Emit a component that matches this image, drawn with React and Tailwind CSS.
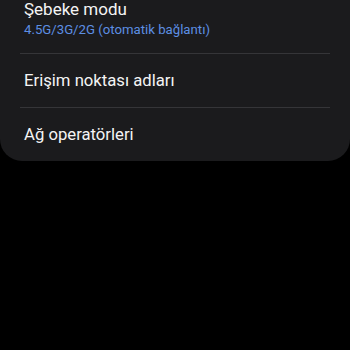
import React from 'react';

const rows = [
  { title: 'Erişim noktası adları' },
  { title: 'Ağ operatörleri' },
];

export default function App() {
  return (
    <div className="w-[350px] h-[350px] bg-black overflow-hidden" style={{ fontFamily: 'Roboto, "Noto Sans", sans-serif' }}>
      <div className="bg-[#1b1b1d] rounded-b-[22px]">
        {/* first row, cut at the top */}
        <div className="px-6 pb-[15px]">
          <div className="text-[17px] leading-[22px] text-[#f4f4f4] -mt-[2px]">Şebeke modu</div>
          <div className="text-[13.2px] leading-[17px] text-[#5d8fe3] mt-[1px]">4.5G/3G/2G (otomatik bağlantı)</div>
        </div>
        {rows.map((row) => (
          <div key={row.title}>
            <div className="mx-5 h-px bg-[#353538]" />
            <div className="px-6 h-[53px] flex items-center text-[16.7px] text-[#f4f4f4]">{row.title}</div>
          </div>
        ))}
      </div>
    </div>
  );
}
